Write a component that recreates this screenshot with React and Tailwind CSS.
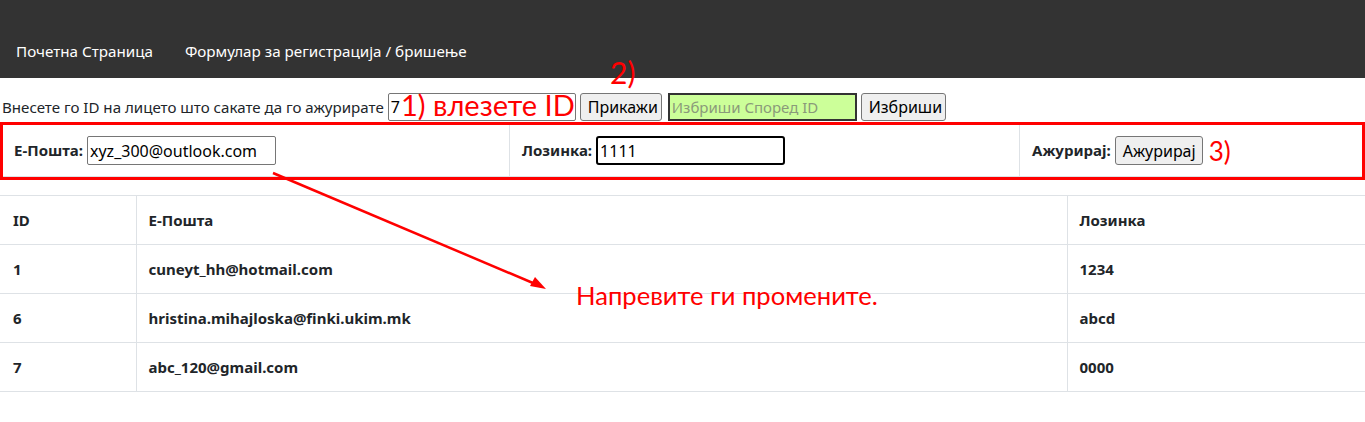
import { memo } from "react";

const users = [
  { id: 1, email: "cuneyt_hh@hotmail.com", password: "1234" },
  { id: 6, email: "hristina.mihajloska@finki.ukim.mk", password: "abcd" },
  { id: 7, email: "abc_120@gmail.com", password: "0000" },
];

const btn =
  "h-[28px] px-[7px] bg-[#efefef] border border-[#767676] rounded-[3px] text-[16px] leading-none text-black";
const inp =
  "h-[28px] border border-[#767676] rounded-[2px] px-[2px] text-[16px] text-black outline-none";

const Annotations = memo(() => (
  <>
    <span className="absolute left-[610px] top-[57px] text-[30px] leading-none text-[#ff0000] font-['Lato',sans-serif]">
      2)
    </span>
    <span className="absolute left-[401px] top-[90px] text-[29px] leading-none text-[#ff0000] font-['Lato',sans-serif]">
      1) влезете ID
    </span>
    <svg
      className="absolute left-0 top-0 pointer-events-none"
      width="1365"
      height="422"
      viewBox="0 0 1365 422"
    >
      <line x1="273" y1="173" x2="540" y2="286" stroke="#ff0000" strokeWidth="2.5" />
      <polygon points="546,289 530,286 535,277" fill="#ff0000" />
    </svg>
    <span className="absolute left-[576px] top-[283px] text-[25.6px] leading-none text-[#ff0000] font-['Lato',sans-serif]">
      Напревите ги промените.
    </span>
  </>
));

Annotations.displayName = "Annotations";

export default function App() {
  return (
    <div className="relative min-h-screen bg-white text-[#212529] font-['Noto_Sans',sans-serif]">
      {/* navbar */}
      <nav className="h-[78px] bg-[#333333] flex items-end pb-[15px] pl-[16px] gap-[32px] text-white text-[15.2px]">
        <a>Почетна Страница</a>
        <a>Формулар за регистрација / бришење</a>
      </nav>

      {/* id search row */}
      <div className="flex items-center gap-[4px] pt-[15px] pl-[2px] text-[15px]">
        <span className="text-[15.1px]">Внесете го ID на лицето што сакате да го ажурирате</span>
        <input className={`${inp} w-[188px]`} defaultValue="7" />
        <button className={`${btn} w-[82px]`}>Прикажи</button>
        <input
          className="ml-[2px] h-[28px] w-[189px] bg-[#ccff99] border-2 border-[#333] px-[2px] text-[15px] placeholder:text-[#8a9a7a] outline-none"
          placeholder="Избриши Според ID"
        />
        <button className={`${btn} w-[85px]`}>Избриши</button>
      </div>

      {/* update row */}
      <div className="mt-[1px] border-[3px] border-[#ff0000] h-[58px]">
        <div className="grid grid-cols-[507px_510px_1fr] h-full border-b border-[#dee2e6] text-[15px]">
          <div className="flex items-center gap-[4px] pl-[11px] border-r border-[#dee2e6]">
            <b>Е-Пошта:</b>
            <input className={`${inp} w-[189px] h-[29px]`} defaultValue="xyz_300@outlook.com" />
          </div>
          <div className="flex items-center gap-[4px] pl-[12px] border-r border-[#dee2e6]">
            <b>Лозинка:</b>
            <input
              className="h-[29px] w-[189px] border-2 border-black rounded-[3px] px-[2px] text-[16px] text-black outline-none"
              defaultValue="1111"
            />
          </div>
          <div className="flex items-center gap-[4px] pl-[12px]">
            <b>Ажурирај:</b>
            <button className={`${btn} h-[29px] w-[88px]`}>Ажурирај</button>
            <span className="ml-[2px] text-[26px] leading-none text-[#ff0000] font-['Lato',sans-serif]">3)</span>
          </div>
        </div>
      </div>

      {/* users table */}
      <table className="mt-[15px] w-full border-collapse text-[15px] font-bold">
        <thead>
          <tr className="border-y border-[#dee2e6]">
            <th className="w-[136px] h-[49px] px-[13px] text-left border-r border-[#dee2e6]">ID</th>
            <th className="w-[931px] px-[12px] text-left border-r border-[#dee2e6]">Е-Пошта</th>
            <th className="px-[12px] text-left">Лозинка</th>
          </tr>
        </thead>
        <tbody>
          {users.map((u) => (
            <tr key={u.id} className="border-b border-[#dee2e6]">
              <td className="h-[49px] px-[13px] border-r border-[#dee2e6]">{u.id}</td>
              <td className="px-[12px] border-r border-[#dee2e6]">{u.email}</td>
              <td className="px-[12px]">{u.password}</td>
            </tr>
          ))}
        </tbody>
      </table>

      <Annotations />
    </div>
  );
}
